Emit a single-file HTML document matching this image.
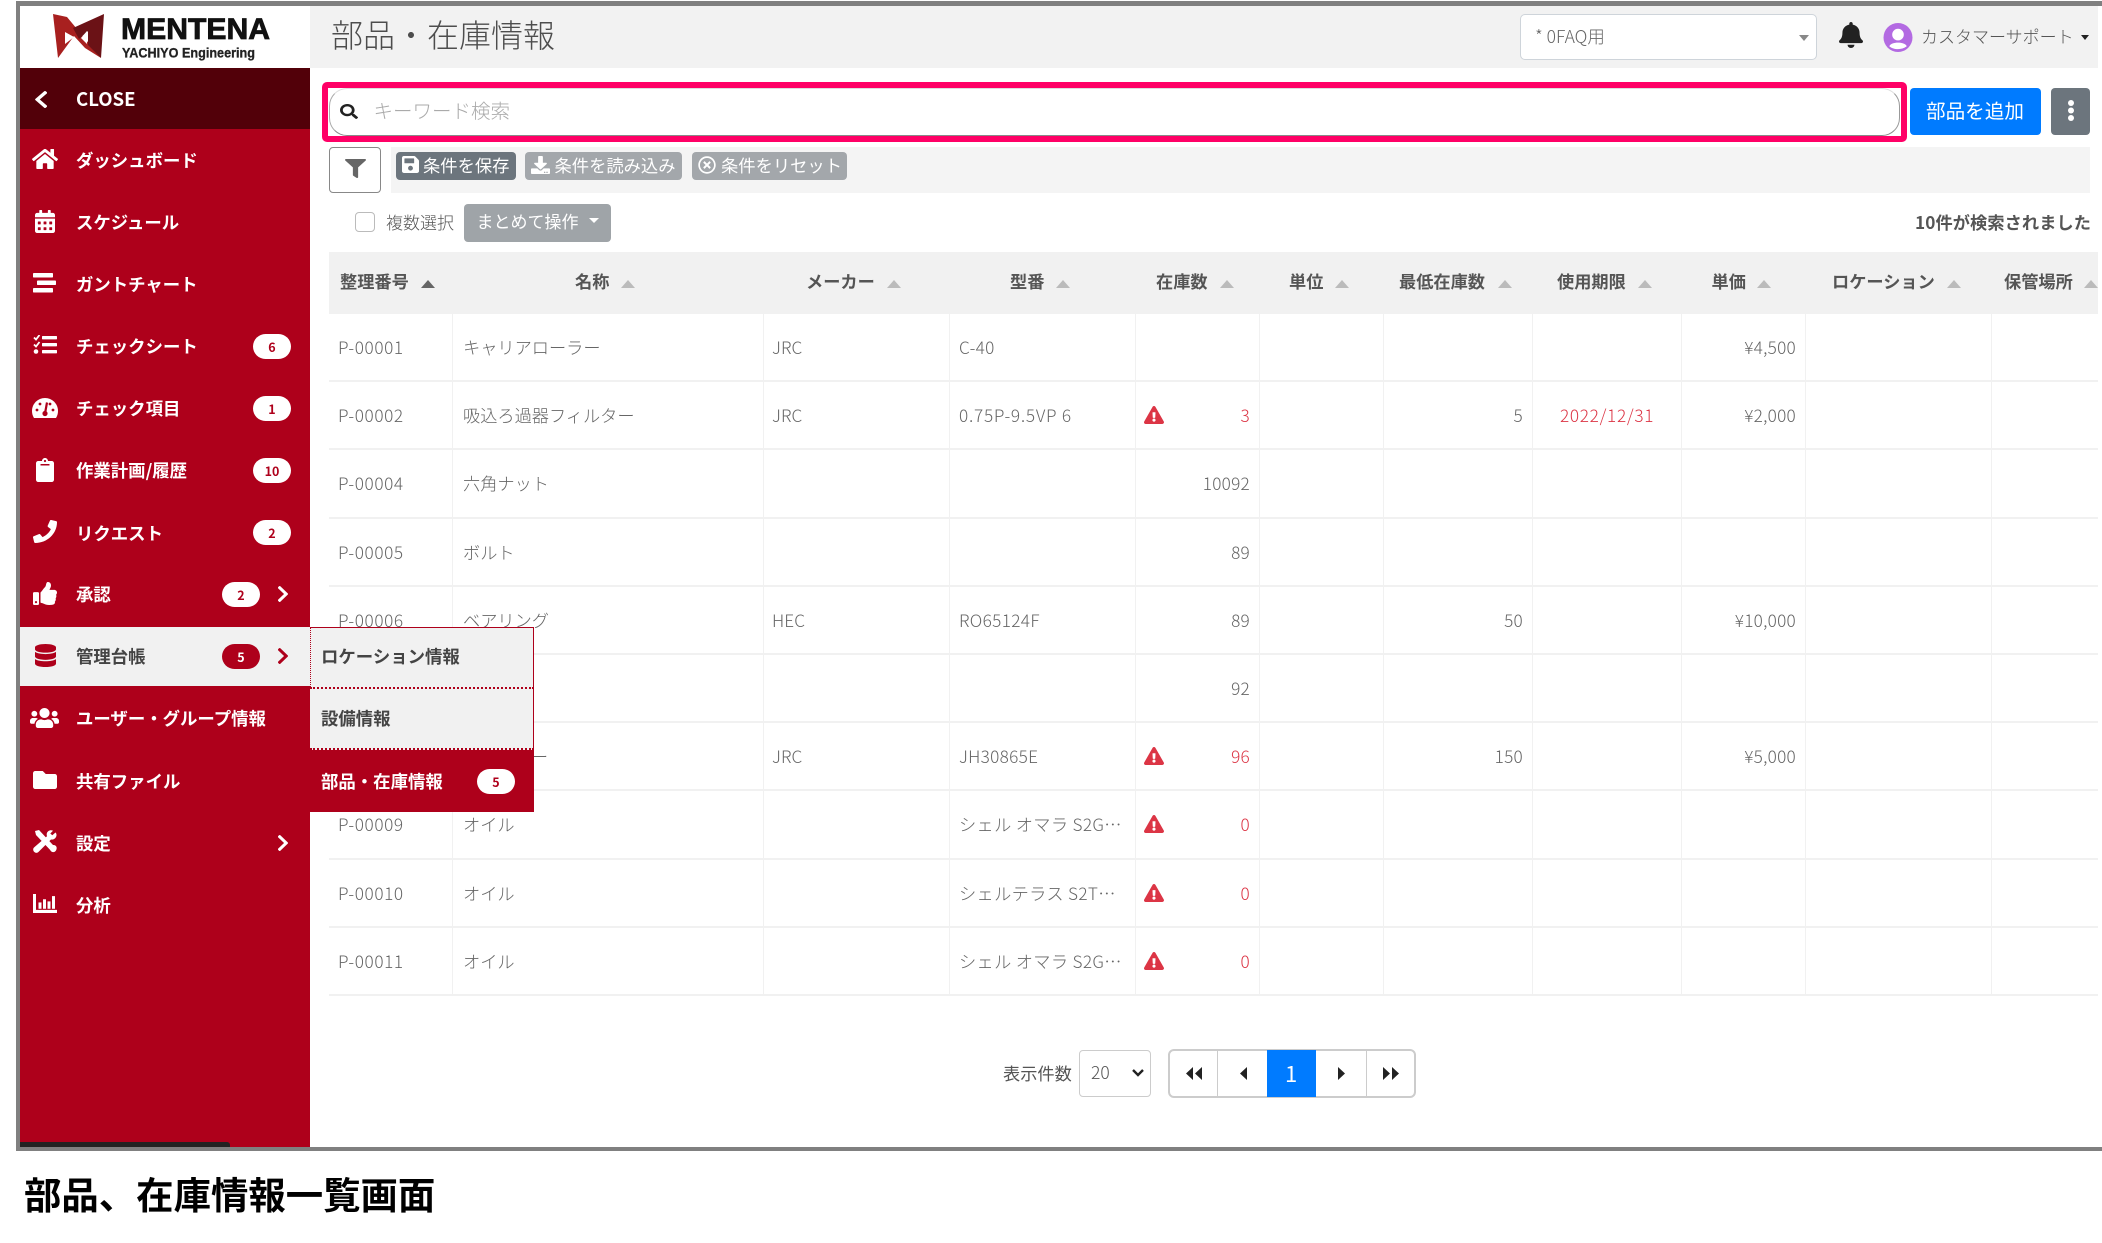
<!DOCTYPE html>
<html lang="ja"><head><meta charset="utf-8"><title>部品・在庫情報</title>
<style>
*{box-sizing:border-box}
html,body{margin:0;padding:0;background:#fff;width:2102px;height:1243px;overflow:hidden}
body{font-family:"Noto Sans CJK JP","Liberation Sans",sans-serif;position:relative}
div,span,svg{position:absolute}
span{white-space:nowrap}
#app{left:20px;top:6px;width:2078px;height:1141px;overflow:hidden;background:#fff}
#fr{left:16px;top:1px;width:2090px;height:1150px;border:4px solid #808080;border-top-width:5px;pointer-events:none}
#in{left:-20px;top:-6px;width:2102px;height:1243px}
.si{left:76px;font-size:17.4px;font-weight:700;color:#fff;line-height:24px}
.bd{width:38px;height:25px;border-radius:13px;background:#fff;color:#ae001b;font-size:12.5px;font-weight:700;text-align:center;line-height:25px}
.ic{fill:#fff}
.row{left:329px;width:1769px;height:68.2px;border-bottom:2px solid #f1f1f1}
.row span{line-height:66px;font-size:17.2px;font-weight:300;color:#666;top:0}
.c1{left:9px;letter-spacing:.6px}.c2{left:134px}.c3{left:443px;letter-spacing:.1px}.c4{left:630px}
.n{letter-spacing:.75px}.k{letter-spacing:.35px}.m{letter-spacing:.3px}
.rt{text-align:right;letter-spacing:.25px}
.c5{right:848px}.c7{right:575px}.c9{right:302px}
.red{color:#dc3545!important}
.c8{left:1231px;letter-spacing:.7px}
.vl{top:314px;width:1px;height:680px;background:#f1f1f1}
.th{top:267.5px;font-size:17.2px;font-weight:700;color:#555;line-height:25px}
.tr{top:280px;width:0;height:0;border-left:7px solid transparent;border-right:7px solid transparent;border-bottom:8px solid #bbb}
.w{left:815px;top:24px;width:20px;height:18px;fill:#dc3545;position:absolute}
.btn{top:152px;height:28px;border-radius:4px;background:#a3a7ab}
.bt{font-size:17.3px;color:#fff;line-height:28px;top:150.5px}
</style></head><body>
<div id="app"><div id="in">
<!-- header -->
<div style="left:310px;top:6px;width:1792px;height:62px;background:#f2f2f2"></div>
<span style="left:331px;top:13px;font-size:32px;font-weight:300;line-height:42px;color:#4d4d4d">部品・在庫情報</span>
<div style="left:1520px;top:14px;width:297px;height:46px;background:#fff;border:1px solid #ced4da;border-radius:5px"></div>
<span style="left:1535px;top:24px;font-size:17.5px;font-weight:300;line-height:26px;color:#666">* 0FAQ用</span>
<div style="left:1799px;top:35px;width:0;height:0;border-left:5px solid transparent;border-right:5px solid transparent;border-top:6px solid #888"></div>
<svg style="left:1839px;top:22px;width:24px;height:26px" viewBox="0 0 448 512" preserveAspectRatio="none" fill="#222"><path d="M224 512c35.32 0 63.97-28.65 63.97-64H160.03c0 35.35 28.65 64 63.97 64zm215.39-149.71c-19.32-20.76-55.47-51.99-55.47-154.29 0-77.7-54.48-139.9-127.94-155.16V32c0-17.67-14.32-32-31.98-32s-31.98 14.33-31.98 32v20.84C118.56 68.1 64.08 130.3 64.08 208c0 102.3-36.15 133.53-55.47 154.29-6 6.45-8.66 14.16-8.61 21.71.11 16.4 12.98 32 32.1 32h383.8c19.12 0 32-15.6 32.1-32 .05-7.55-2.61-15.27-8.61-21.71z"/></svg>
<svg style="left:1883px;top:23px;width:30px;height:29px" viewBox="0 0 30 30"><circle cx="15" cy="15" r="15" fill="#b36ae2"/><circle cx="15" cy="12" r="6" fill="#fff"/><path d="M6 24c2-5 16-5 18 0-4 4-14 4-18 0z" fill="#fff"/></svg>
<span style="left:1921px;top:23px;font-size:17px;font-weight:300;line-height:26px;color:#555">カスタマーサポート</span>
<div style="left:2081px;top:35px;width:0;height:0;border-left:4.5px solid transparent;border-right:4.5px solid transparent;border-top:5px solid #222"></div>

<!-- search -->
<div style="left:322px;top:82px;width:1585px;height:60px;border:6px solid #ff0066;border-radius:5px;background:#fff"></div>
<div style="left:329px;top:88px;width:1571px;height:48px;border:1px solid #ddd;border-bottom:1px solid #888;border-right:1px solid #999;border-left:1px solid #aaa;border-radius:18px;background:#fff"></div>
<svg style="left:340px;top:104px;width:18px;height:15px" viewBox="0 0 512 512" preserveAspectRatio="none" fill="#222"><path d="M505 442.7L405.3 343c-4.5-4.5-10.6-7-17-7H372c27.6-35.3 44-79.7 44-128C416 93.1 322.9 0 208 0S0 93.1 0 208s93.1 208 208 208c48.3 0 92.7-16.4 128-44v16.3c0 6.4 2.5 12.5 7 17l99.7 99.7c9.4 9.4 24.6 9.4 33.9 0l28.3-28.3c9.4-9.4 9.4-24.6.1-34zM208 336c-70.7 0-128-57.2-128-128 0-70.7 57.2-128 128-128 70.7 0 128 57.2 128 128 0 70.7-57.2 128-128 128z"/></svg>
<span style="left:373.5px;top:95.5px;font-size:19.5px;font-weight:300;line-height:28px;color:#aaa">キーワード検索</span>
<div style="left:1909.5px;top:88px;width:131.5px;height:47px;background:#007bff;border-radius:4px"></div>
<span style="left:1926px;top:96px;font-size:19.6px;line-height:28px;color:#fff">部品を追加</span>
<div style="left:2051px;top:88px;width:39px;height:47px;background:#6c757d;border-radius:4px"></div>
<svg style="left:2067px;top:100px;width:8px;height:21px" viewBox="0 0 8 21" fill="#fff"><circle cx="4" cy="3" r="3"/><circle cx="4" cy="10.5" r="3"/><circle cx="4" cy="18" r="3"/></svg>

<!-- toolbar -->
<div style="left:391px;top:147px;width:1699px;height:46px;background:#f4f4f4"></div>
<div style="left:329px;top:147px;width:52px;height:46px;background:#fff;border:1px solid #888;border-radius:4px"></div>
<svg style="left:345px;top:159px;width:21px;height:19px" viewBox="0 0 512 512" preserveAspectRatio="none" fill="#666"><path d="M487.976 0H24.028C2.71 0-8.047 25.866 7.058 40.971L192 225.941V432c0 7.831 3.821 15.17 10.237 19.662l80 55.98C298.02 518.69 320 507.493 320 487.98V225.941l184.947-184.97C520.021 25.896 509.338 0 487.976 0z"/></svg>
<div class="btn" style="left:396px;width:120px;background:#6c757d"></div>
<svg style="left:402px;top:156px;width:17px;height:17px" viewBox="0 32 448 448" preserveAspectRatio="none" fill="#fff"><path d="M433.941 129.941l-83.882-83.882A48 48 0 0 0 316.118 32H48C21.49 32 0 53.49 0 80v352c0 26.51 21.49 48 48 48h352c26.51 0 48-21.49 48-48V163.882a48 48 0 0 0-14.059-33.941zM224 416c-35.346 0-64-28.654-64-64 0-35.346 28.654-64 64-64s64 28.654 64 64c0 35.346-28.654 64-64 64zm96-304.52V212c0 6.627-5.373 12-12 12H76c-6.627 0-12-5.373-12-12V108c0-6.627 5.373-12 12-12h228.52c3.183 0 6.235 1.264 8.485 3.515l3.48 3.48A11.996 11.996 0 0 1 320 111.48z"/></svg>
<span class="bt" style="left:423px">条件を保存</span>
<div class="btn" style="left:525px;width:157px"></div>
<svg style="left:531px;top:156px;width:19px;height:18px" viewBox="0 0 512 512" preserveAspectRatio="none" fill="#fff"><path d="M216 0h80c13.3 0 24 10.7 24 24v168h87.7c17.8 0 26.7 21.5 14.1 34.1L269.7 378.3c-7.5 7.5-19.8 7.5-27.3 0L90.1 226.1c-12.6-12.6-3.7-34.1 14.1-34.1H192V24c0-13.3 10.7-24 24-24zm296 376v112c0 13.3-10.7 24-24 24H24c-13.3 0-24-10.7-24-24V376c0-13.3 10.7-24 24-24h146.7l49 49c20.1 20.1 52.5 20.1 72.6 0l49-49H488c13.3 0 24 10.7 24 24zm-124 88c0-11-9-20-20-20s-20 9-20 20 9 20 20 20 20-9 20-20zm64 0c0-11-9-20-20-20s-20 9-20 20 9 20 20 20 20-9 20-20z"/></svg>
<span class="bt" style="left:554.5px">条件を読み込み</span>
<div class="btn" style="left:692px;width:155px"></div>
<svg style="left:698px;top:156px;width:18px;height:18px" viewBox="0 0 512 512" fill="#fff"><path d="M256 8C119 8 8 119 8 256s111 248 248 248 248-111 248-248S393 8 256 8zm0 448c-110.5 0-200-89.5-200-200S145.5 56 256 56s200 89.5 200 200-89.5 200-200 200zm101.8-262.2L295.6 256l62.2 62.2c4.7 4.7 4.7 12.3 0 17l-22.6 22.6c-4.7 4.7-12.3 4.7-17 0L256 295.6l-62.2 62.2c-4.7 4.7-12.3 4.7-17 0l-22.6-22.6c-4.7-4.7-4.7-12.3 0-17l62.2-62.2-62.2-62.2c-4.7-4.7-4.7-12.3 0-17l22.6-22.6c4.7-4.7 12.3-4.7 17 0l62.2 62.2 62.2-62.2c4.7-4.7 12.3-4.7 17 0l22.6 22.6c4.7 4.7 4.7 12.3 0 17z"/></svg>
<span class="bt" style="left:721px">条件をリセット</span>

<!-- multi-select -->
<div style="left:355px;top:212px;width:20px;height:20px;border:1px solid #bbb;border-radius:4px;background:#fff"></div>
<span style="left:386px;top:208.5px;font-size:17px;font-weight:300;line-height:26px;color:#555">複数選択</span>
<div style="left:464px;top:204px;width:147px;height:38px;background:#9fa4a8;border-radius:4px"></div>
<span style="left:476.5px;top:208px;font-size:17px;line-height:26px;color:#fff">まとめて操作</span>
<div style="left:589px;top:218px;width:0;height:0;border-left:5px solid transparent;border-right:5px solid transparent;border-top:5px solid #fff"></div>
<span style="left:1915px;top:209px;font-size:17.2px;font-weight:700;line-height:26px;color:#555;letter-spacing:.1px">10件が検索されました</span>

<!-- table head -->
<div style="left:329px;top:252px;width:1773px;height:62px;background:#f1f1f1"></div>
<span class="th" style="left:340px">整理番号</span><div class="tr" style="left:421px;border-bottom-color:#666"></div>
<span class="th" style="left:575px">名称</span><div class="tr" style="left:621px"></div>
<span class="th" style="left:806px">メーカー</span><div class="tr" style="left:887px"></div>
<span class="th" style="left:1010px">型番</span><div class="tr" style="left:1056px"></div>
<span class="th" style="left:1156px">在庫数</span><div class="tr" style="left:1220px"></div>
<span class="th" style="left:1289px">単位</span><div class="tr" style="left:1335px"></div>
<span class="th" style="left:1399px">最低在庫数</span><div class="tr" style="left:1498px"></div>
<span class="th" style="left:1557px">使用期限</span><div class="tr" style="left:1638px"></div>
<span class="th" style="left:1711.5px">単価</span><div class="tr" style="left:1757px"></div>
<span class="th" style="left:1832px">ロケーション</span><div class="tr" style="left:1947px"></div>
<span class="th" style="left:2004px">保管場所</span><div class="tr" style="left:2084px"></div>

<!-- table lines -->
<div class="vl" style="left:452px"></div><div class="vl" style="left:763px"></div><div class="vl" style="left:949px"></div><div class="vl" style="left:1135px"></div><div class="vl" style="left:1259px"></div><div class="vl" style="left:1383px"></div><div class="vl" style="left:1532px"></div><div class="vl" style="left:1681px"></div><div class="vl" style="left:1805px"></div><div class="vl" style="left:1991px"></div>

<!-- rows -->
<div class="row" style="top:314px"><span class="c1">P-00001</span><span class="c2">キャリアローラー</span><span class="c3">JRC</span><span class="c4 m">C-40</span><span class="c9 rt">¥4,500</span></div>
<div class="row" style="top:382.2px"><span class="c1">P-00002</span><span class="c2">吸込ろ過器フィルター</span><span class="c3">JRC</span><span class="c4 n">0.75P-9.5VP 6</span><svg class="w" viewBox="0 0 576 512" preserveAspectRatio="none"><path d="M569.517 440.013C587.975 472.007 564.806 512 527.94 512H48.054c-36.937 0-59.999-40.055-41.577-71.987L246.423 23.985c18.467-32.009 64.72-31.951 83.154 0l239.94 416.028zM288 354c-25.405 0-46 20.595-46 46s20.595 46 46 46 46-20.595 46-46-20.595-46-46-46zm-43.673-165.346l7.418 136c.347 6.364 5.609 11.346 11.982 11.346h48.546c6.373 0 11.635-4.982 11.982-11.346l7.418-136c.375-6.874-5.098-12.654-11.982-12.654h-63.383c-6.884 0-12.356 5.78-11.981 12.654z"/></svg><span class="c5 rt red">3</span><span class="c7 rt">5</span><span class="c8 red">2022/12/31</span><span class="c9 rt">¥2,000</span></div>
<div class="row" style="top:450.4px"><span class="c1">P-00004</span><span class="c2">六角ナット</span><span class="c5 rt">10092</span></div>
<div class="row" style="top:518.6px"><span class="c1">P-00005</span><span class="c2">ボルト</span><span class="c5 rt">89</span></div>
<div class="row" style="top:586.8px"><span class="c1">P-00006</span><span class="c2">ベアリング</span><span class="c3">HEC</span><span class="c4 k">RO65124F</span><span class="c5 rt">89</span><span class="c7 rt">50</span><span class="c9 rt">¥10,000</span></div>
<div class="row" style="top:655px"><span class="c1">P-00007</span><span class="c5 rt">92</span></div>
<div class="row" style="top:723.2px"><span class="c1">P-00008</span><span class="c2">グリースー</span><span class="c3">JRC</span><span class="c4 m">JH30865E</span><svg class="w" viewBox="0 0 576 512" preserveAspectRatio="none"><path d="M569.517 440.013C587.975 472.007 564.806 512 527.94 512H48.054c-36.937 0-59.999-40.055-41.577-71.987L246.423 23.985c18.467-32.009 64.72-31.951 83.154 0l239.94 416.028zM288 354c-25.405 0-46 20.595-46 46s20.595 46 46 46 46-20.595 46-46-20.595-46-46-46zm-43.673-165.346l7.418 136c.347 6.364 5.609 11.346 11.982 11.346h48.546c6.373 0 11.635-4.982 11.982-11.346l7.418-136c.375-6.874-5.098-12.654-11.982-12.654h-63.383c-6.884 0-12.356 5.78-11.981 12.654z"/></svg><span class="c5 rt red">96</span><span class="c7 rt">150</span><span class="c9 rt">¥5,000</span></div>
<div class="row" style="top:791.4px"><span class="c1">P-00009</span><span class="c2">オイル</span><span class="c4 k">シェル オマラ S2G…</span><svg class="w" viewBox="0 0 576 512" preserveAspectRatio="none"><path d="M569.517 440.013C587.975 472.007 564.806 512 527.94 512H48.054c-36.937 0-59.999-40.055-41.577-71.987L246.423 23.985c18.467-32.009 64.72-31.951 83.154 0l239.94 416.028zM288 354c-25.405 0-46 20.595-46 46s20.595 46 46 46 46-20.595 46-46-20.595-46-46-46zm-43.673-165.346l7.418 136c.347 6.364 5.609 11.346 11.982 11.346h48.546c6.373 0 11.635-4.982 11.982-11.346l7.418-136c.375-6.874-5.098-12.654-11.982-12.654h-63.383c-6.884 0-12.356 5.78-11.981 12.654z"/></svg><span class="c5 rt red">0</span></div>
<div class="row" style="top:859.6px"><span class="c1">P-00010</span><span class="c2">オイル</span><span class="c4 k">シェルテラス S2T…</span><svg class="w" viewBox="0 0 576 512" preserveAspectRatio="none"><path d="M569.517 440.013C587.975 472.007 564.806 512 527.94 512H48.054c-36.937 0-59.999-40.055-41.577-71.987L246.423 23.985c18.467-32.009 64.72-31.951 83.154 0l239.94 416.028zM288 354c-25.405 0-46 20.595-46 46s20.595 46 46 46 46-20.595 46-46-20.595-46-46-46zm-43.673-165.346l7.418 136c.347 6.364 5.609 11.346 11.982 11.346h48.546c6.373 0 11.635-4.982 11.982-11.346l7.418-136c.375-6.874-5.098-12.654-11.982-12.654h-63.383c-6.884 0-12.356 5.78-11.981 12.654z"/></svg><span class="c5 rt red">0</span></div>
<div class="row" style="top:927.8px"><span class="c1">P-00011</span><span class="c2">オイル</span><span class="c4 k">シェル オマラ S2G…</span><svg class="w" viewBox="0 0 576 512" preserveAspectRatio="none"><path d="M569.517 440.013C587.975 472.007 564.806 512 527.94 512H48.054c-36.937 0-59.999-40.055-41.577-71.987L246.423 23.985c18.467-32.009 64.72-31.951 83.154 0l239.94 416.028zM288 354c-25.405 0-46 20.595-46 46s20.595 46 46 46 46-20.595 46-46-20.595-46-46-46zm-43.673-165.346l7.418 136c.347 6.364 5.609 11.346 11.982 11.346h48.546c6.373 0 11.635-4.982 11.982-11.346l7.418-136c.375-6.874-5.098-12.654-11.982-12.654h-63.383c-6.884 0-12.356 5.78-11.981 12.654z"/></svg><span class="c5 rt red">0</span></div>

<!-- pagination -->
<span style="left:1003px;top:1060px;font-size:17.2px;line-height:26px;color:#555">表示件数</span>
<div style="left:1079px;top:1050px;width:72px;height:47px;border:1px solid #ccc;border-radius:4px;background:#fff"></div>
<span style="left:1091px;top:1060px;font-size:17.5px;font-weight:300;line-height:26px;color:#555">20</span>
<svg style="left:1132px;top:1068px;width:12px;height:10px" viewBox="0 0 12 10" fill="none" stroke="#222" stroke-width="2.4"><path d="M1 2l5 5 5-5"/></svg>
<div style="left:1168px;top:1049px;width:248px;height:49px;border:2px solid #ccc;border-radius:6px;background:#fff"></div>
<div style="left:1217px;top:1050px;width:1px;height:47px;background:#ccc"></div>
<div style="left:1267px;top:1050px;width:49px;height:47px;background:#007bff"></div>
<div style="left:1366px;top:1050px;width:1px;height:47px;background:#ccc"></div>
<span style="left:1285px;top:1058px;font-size:22px;line-height:30px;color:#fff">1</span>
<svg style="left:1185px;top:1067px;width:18px;height:13px" viewBox="0 0 18 13" fill="#222"><path d="M8 0v13L1 6.500zM17 0v13L10 6.500z"/></svg>
<svg style="left:1239px;top:1067px;width:8px;height:13px" viewBox="0 0 8 13" fill="#222"><path d="M8 0v13L1 6.500z"/></svg>
<svg style="left:1338px;top:1067px;width:8px;height:13px" viewBox="0 0 8 13" fill="#222"><path d="M0 0v13l7-6.500z"/></svg>
<svg style="left:1382px;top:1067px;width:18px;height:13px" viewBox="0 0 18 13" fill="#222"><path d="M1 0v13l7-6.500zM10 0v13l7-6.500z"/></svg>

<!-- sidebar -->
<div style="left:20px;top:6px;width:290px;height:62px;background:#fff"></div>
<svg style="left:53px;top:14px;width:51px;height:44px" viewBox="53 14 51 44"><polygon points="53,14 67,17 101,58 85,48 74,36 58,58" fill="#a8201f"/><polygon points="104,14 101,58 88,45 88,31 79,39 73,28" fill="#6b1216"/><polygon points="65,32 65,44 74,37" fill="#fff"/><polygon points="87,31 87,44 81,38" fill="#fff"/></svg>
<svg style="left:118px;top:12px;width:160px;height:52px" viewBox="118 12 160 52"><text x="121" y="39" font-family="Liberation Sans" font-weight="700" font-size="30" textLength="149" lengthAdjust="spacingAndGlyphs" fill="#111" stroke="#111" stroke-width=".8">MENTENA</text><text x="122" y="57.500" font-family="Liberation Sans" font-weight="700" font-size="14" textLength="133" lengthAdjust="spacingAndGlyphs" fill="#222" stroke="#222" stroke-width=".3">YACHIYO Engineering</text></svg>
<div style="left:20px;top:68px;width:290px;height:61px;background:#520009"></div>
<div style="left:20px;top:129px;width:290px;height:1018px;background:#ae001b"></div>
<div style="left:20px;top:1142px;width:210px;height:5px;background:#222;border-radius:0 3px 0 0"></div>
<svg style="left:35px;top:91px;width:12px;height:17px" viewBox="25 37 265 438" preserveAspectRatio="none" fill="#fff"><path d="M34.52 239.03L228.87 44.69c9.37-9.37 24.57-9.37 33.94 0l22.67 22.67c9.36 9.36 9.37 24.52.04 33.9L131.49 256l154.02 154.75c9.34 9.38 9.32 24.54-.04 33.9l-22.67 22.67c-9.37 9.37-24.57 9.37-33.94 0L34.52 272.97c-9.37-9.37-9.37-24.57 0-33.94z"/></svg>
<span class="si" style="top:87px;font-size:18.6px">CLOSE</span>

<svg class="ic" style="left:32px;top:149px;width:26px;height:20px" viewBox="0 32 576 448" preserveAspectRatio="none"><path d="M280.37 148.26L96 300.11V464a16 16 0 0 0 16 16l112.06-.29a16 16 0 0 0 15.92-16V368a16 16 0 0 1 16-16h64a16 16 0 0 1 16 16v95.64a16 16 0 0 0 16 16.05L464 480a16 16 0 0 0 16-16V300L295.67 148.26a12.19 12.19 0 0 0-15.3 0zM571.6 251.47L488 182.56V44.05a12 12 0 0 0-12-12h-56a12 12 0 0 0-12 12v72.61L318.47 43a48 48 0 0 0-61 0L4.34 251.47a12 12 0 0 0-1.6 16.9l25.5 31A12 12 0 0 0 45.15 301l235.22-193.74a12.19 12.19 0 0 1 15.3 0L530.9 301a12 12 0 0 0 16.9-1.6l25.5-31a12 12 0 0 0-1.7-16.93z"/></svg>
<span class="si" style="top:149px">ダッシュボード</span>
<svg class="ic" style="left:35px;top:210px;width:20px;height:23px" viewBox="0 0 448 512" preserveAspectRatio="none"><path d="M0 464c0 26.5 21.5 48 48 48h352c26.5 0 48-21.5 48-48V192H0v272zm320-196c0-6.6 5.4-12 12-12h40c6.6 0 12 5.4 12 12v40c0 6.6-5.4 12-12 12h-40c-6.6 0-12-5.4-12-12v-40zm0 128c0-6.6 5.4-12 12-12h40c6.6 0 12 5.4 12 12v40c0 6.6-5.4 12-12 12h-40c-6.6 0-12-5.4-12-12v-40zM192 268c0-6.6 5.4-12 12-12h40c6.6 0 12 5.4 12 12v40c0 6.6-5.4 12-12 12h-40c-6.6 0-12-5.4-12-12v-40zm0 128c0-6.6 5.4-12 12-12h40c6.6 0 12 5.4 12 12v40c0 6.6-5.4 12-12 12h-40c-6.6 0-12-5.4-12-12v-40zM64 268c0-6.6 5.4-12 12-12h40c6.6 0 12 5.4 12 12v40c0 6.6-5.4 12-12 12H76c-6.6 0-12-5.4-12-12v-40zm0 128c0-6.6 5.4-12 12-12h40c6.6 0 12 5.4 12 12v40c0 6.6-5.4 12-12 12H76c-6.6 0-12-5.4-12-12v-40zM400 64h-48V16c0-8.8-7.2-16-16-16h-32c-8.8 0-16 7.2-16 16v48H160V16c0-8.8-7.2-16-16-16h-32c-8.8 0-16 7.2-16 16v48H48C21.5 64 0 85.5 0 112v48h448v-48c0-26.5-21.5-48-48-48z"/></svg>
<span class="si" style="top:211px">スケジュール</span>
<svg class="ic" style="left:33px;top:273px;width:23px;height:20px" viewBox="0 0 23 20"><rect x="0" y="0" width="20" height="4.500" rx=".8"/><rect x="4" y="7.500" width="19" height="4.500" rx=".8"/><rect x="0" y="15" width="20" height="4.500" rx=".8"/></svg>
<span class="si" style="top:273px">ガントチャート</span>
<svg class="ic" style="left:33px;top:335px;width:24px;height:19px" viewBox="0 0 24 19"><rect x="9" y="1" width="15" height="3.400" rx=".7"/><rect x="9" y="8" width="15" height="3.400" rx=".7"/><rect x="9" y="15" width="15" height="3.400" rx=".7"/><path d="M1 2.500l2 2L6.500 0" fill="none" stroke="#fff" stroke-width="1.800"/><path d="M1 9.500l2 2L6.500 7" fill="none" stroke="#fff" stroke-width="1.800"/><circle cx="3" cy="16.500" r="2.300"/></svg>
<span class="si" style="top:335px">チェックシート</span>
<div class="bd" style="left:253px;top:334px">6</div>
<svg class="ic" style="left:32px;top:398px;width:26px;height:20px" viewBox="0 0 26 20"><path d="M13 0C5.800 0 0 5.800 0 13c0 2.600.7 5 2 7h22c1.300-2 2-4.400 2-7C26 5.800 20.200 0 13 0z"/><circle cx="5" cy="12" r="1.400" fill="#ae001b"/><circle cx="8" cy="6" r="1.400" fill="#ae001b"/><circle cx="21" cy="12" r="1.400" fill="#ae001b"/><circle cx="18" cy="6" r="1.400" fill="#ae001b"/><path d="M13 15.500L15 4.500" stroke="#ae001b" stroke-width="2.200"/><circle cx="13" cy="15.500" r="2.600" fill="#ae001b"/></svg>
<span class="si" style="top:397px">チェック項目</span>
<div class="bd" style="left:253px;top:396px">1</div>
<svg class="ic" style="left:36px;top:458px;width:18px;height:24px" viewBox="0 0 384 512" preserveAspectRatio="none"><path d="M384 112v352c0 26.51-21.49 48-48 48H48c-26.51 0-48-21.49-48-48V112c0-26.51 21.49-48 48-48h80c0-35.29 28.71-64 64-64s64 28.71 64 64h80c26.51 0 48 21.49 48 48zM192 40c-13.255 0-24 10.745-24 24s10.745 24 24 24 24-10.745 24-24-10.745-24-24-24m96 114v-20a6 6 0 0 0-6-6H102a6 6 0 0 0-6 6v20a6 6 0 0 0 6 6h180a6 6 0 0 0 6-6z"/></svg>
<span class="si" style="top:459px">作業計画/履歴</span>
<div class="bd" style="left:253px;top:458px">10</div>
<svg class="ic" style="left:33px;top:520px;width:24px;height:23px" viewBox="0 0 512 512" preserveAspectRatio="none"><path d="M493.4 24.6l-104-24c-11.3-2.6-22.900 3.300-27.500 13.900l-48 112c-4.200 9.800-1.400 21.300 6.900 28l60.600 49.600c-36 76.700-98.900 140.500-177.200 177.200l-49.600-60.600c-6.800-8.300-18.200-11.100-28-6.900l-112 48C3.900 366.500-2 378.100.6 389.400l24 104C27.900 504.200 37.500 512 48 512c256.100 0 464-207.500 464-464 0-11.200-7.700-20.900-18.600-23.400z"/></svg>
<span class="si" style="top:522px">リクエスト</span>
<div class="bd" style="left:253px;top:520px">2</div>
<svg class="ic" style="left:33px;top:582px;width:24px;height:23px" viewBox="0 0 512 512" preserveAspectRatio="none"><path d="M104 224H24c-13.255 0-24 10.745-24 24v240c0 13.255 10.745 24 24 24h80c13.255 0 24-10.745 24-24V248c0-13.255-10.745-24-24-24zM64 472c-13.255 0-24-10.745-24-24s10.745-24 24-24 24 10.745 24 24-10.745 24-24 24zM384 81.452c0 42.416-25.970 66.208-33.277 94.548h101.723c33.397 0 59.397 27.746 59.553 58.098.084 17.938-7.546 37.249-19.439 49.197l-.11.11c9.836 23.337 8.237 56.037-9.308 79.469 8.681 25.895-.069 57.704-16.382 74.757 4.298 17.598 2.244 32.575-6.148 44.632C440.202 511.587 389.616 512 346.839 512l-2.845-.001c-48.287-.017-87.806-17.598-119.560-31.725-15.957-7.099-36.821-15.887-52.651-16.178-6.540-.12-11.783-5.457-11.783-11.998v-213.770c0-3.200 1.282-6.271 3.558-8.521 39.614-39.144 56.648-80.587 89.117-113.111 14.804-14.832 20.188-37.236 25.393-58.902C282.515 39.293 291.817 0 312 0c24 0 72 8 72 81.452z"/></svg>
<span class="si" style="top:583px">承認</span>
<div class="bd" style="left:222px;top:582px">2</div>
<svg class="ic" style="left:278px;top:586px;width:10px;height:16px" viewBox="30 37 262 438" preserveAspectRatio="none"><path d="M285.476 272.971L91.132 467.314c-9.373 9.373-24.569 9.373-33.941 0l-22.667-22.667c-9.357-9.357-9.375-24.522-.04-33.901L188.505 256 34.484 101.255c-9.335-9.379-9.317-24.544.04-33.901l22.667-22.667c9.373-9.373 24.569-9.373 33.941 0L285.475 239.03c9.373 9.372 9.373 24.568.001 33.941z"/></svg>

<div style="left:20px;top:627px;width:290px;height:59px;background:#f1f1f1"></div>
<svg style="left:35px;top:644px;width:21px;height:23px" fill="#ae001b" viewBox="0 0 448 512" preserveAspectRatio="none"><path d="M448 73.143v45.714C448 159.143 347.667 192 224 192S0 159.143 0 118.857V73.143C0 32.857 100.333 0 224 0s224 32.857 224 73.143zM448 176v102.857C448 319.143 347.667 352 224 352S0 319.143 0 278.857V176c48.125 33.143 136.208 48.572 224 48.572S399.874 209.143 448 176zm0 160v102.857C448 479.143 347.667 512 224 512S0 479.143 0 438.857V336c48.125 33.143 136.208 48.572 224 48.572S399.874 369.143 448 336z"/></svg>
<span class="si" style="top:645px;color:#444;font-weight:700">管理台帳</span>
<div class="bd" style="left:222px;top:644px;background:#ae001b;color:#fff">5</div>
<svg style="left:278px;top:648px;width:10px;height:16px" fill="#ae001b" viewBox="30 37 262 438" preserveAspectRatio="none"><path d="M285.476 272.971L91.132 467.314c-9.373 9.373-24.569 9.373-33.941 0l-22.667-22.667c-9.357-9.357-9.375-24.522-.04-33.901L188.505 256 34.484 101.255c-9.335-9.379-9.317-24.544.04-33.901l22.667-22.667c9.373-9.373 24.569-9.373 33.941 0L285.475 239.030c9.373 9.372 9.373 24.568.001 33.941z"/></svg>

<svg class="ic" style="left:30px;top:708px;width:29px;height:20px" viewBox="0 32 640 448" preserveAspectRatio="none"><path d="M96 224c35.300 0 64-28.700 64-64s-28.700-64-64-64-64 28.700-64 64 28.700 64 64 64zm448 0c35.300 0 64-28.700 64-64s-28.700-64-64-64-64 28.700-64 64 28.700 64 64 64zm32 32h-64c-17.600 0-33.500 7.100-45.100 18.600 40.300 22.100 68.900 62 75.100 109.400h66c17.700 0 32-14.300 32-32v-32c0-35.300-28.700-64-64-64zm-256 0c61.900 0 112-50.100 112-112S381.900 32 320 32 208 82.100 208 144s50.100 112 112 112zm76.800 32h-8.300c-20.800 10-43.900 16-68.500 16s-47.600-6-68.500-16h-8.300C179.600 288 128 339.600 128 403.200V432c0 26.500 21.500 48 48 48h288c26.500 0 48-21.500 48-48v-28.800c0-63.600-51.600-115.200-115.200-115.200zm-223.700-13.400C161.500 263.100 145.600 256 128 256H64c-35.300 0-64 28.700-64 64v32c0 17.700 14.300 32 32 32h65.900c6.300-47.400 34.900-87.300 75.200-109.400z"/></svg>
<span class="si" style="top:707px">ユーザー・グループ情報</span>
<svg class="ic" style="left:33px;top:771px;width:24px;height:18px" viewBox="0 64 512 384" preserveAspectRatio="none"><path d="M464 128H272l-64-64H48C21.490 64 0 85.490 0 112v288c0 26.510 21.490 48 48 48h416c26.510 0 48-21.490 48-48V176c0-26.510-21.490-48-48-48z"/></svg>
<span class="si" style="top:770px">共有ファイル</span>
<svg class="ic" style="left:33px;top:830px;width:24px;height:23px" viewBox="0 0 24 23"><path d="M2 1l4-1 14 15c1.500-.2 3 .6 3.500 2 .6 2-.6 4.500-2.500 5-1.600.4-3.300-.5-3.800-2L3 5z"/><path d="M22.500 2.500l-3.200 2.800-2-1.800L20 .8C17.500-.5 14.500.8 13.800 3.500c-.2 1-.1 2 .2 2.800L1 17.500c-1.200 1.200-1 3.200.2 4.400 1.200 1.200 3 1.300 4.200.1L18 9.500c3 .5 5.500-1.700 5.500-4.500 0-1-.3-1.800-1-2.500z"/></svg>
<span class="si" style="top:832px">設定</span>
<svg class="ic" style="left:278px;top:835px;width:10px;height:16px" viewBox="30 37 262 438" preserveAspectRatio="none"><path d="M285.476 272.971L91.132 467.314c-9.373 9.373-24.569 9.373-33.941 0l-22.667-22.667c-9.357-9.357-9.375-24.522-.04-33.901L188.505 256 34.484 101.255c-9.335-9.379-9.317-24.544.04-33.901l22.667-22.667c9.373-9.373 24.569-9.373 33.941 0L285.475 239.030c9.373 9.372 9.373 24.568.001 33.941z"/></svg>
<svg class="ic" style="left:33px;top:894px;width:24px;height:19px" viewBox="0 0 24 18" preserveAspectRatio="none"><path d="M0 0h3v15h21v3H0z"/><rect x="5.500" y="8" width="3" height="6"/><rect x="10" y="5" width="3" height="9"/><rect x="14.500" y="7" width="3" height="7"/><rect x="19" y="2" width="3" height="12"/></svg>
<span class="si" style="top:894px">分析</span>

<!-- submenu -->
<div style="left:310px;top:627px;width:224px;height:60px;background:#f1f1f1;border:1px solid #ae001b;border-left:1px dotted #ae001b;border-bottom:0"></div>
<span class="si" style="left:321px;top:645px;color:#444">ロケーション情報</span>
<div style="left:310px;top:687px;width:224px;height:63px;background:#f1f1f1;border-top:2px dotted #ae001b;border-right:1px solid #ae001b;border-bottom:2px dotted #ae001b"></div>
<span class="si" style="left:321px;top:707px;color:#444">設備情報</span>
<div style="left:310px;top:750px;width:224px;height:62px;background:#ae001b"></div>
<span class="si" style="left:321px;top:770px">部品・在庫情報</span>
<div class="bd" style="left:477px;top:769px">5</div>
</div></div>
<div id="fr"></div>
<span style="left:24px;top:1168px;font-size:37.4px;font-weight:700;line-height:50px;color:#000">部品、在庫情報一覧画面</span>
</body></html>
